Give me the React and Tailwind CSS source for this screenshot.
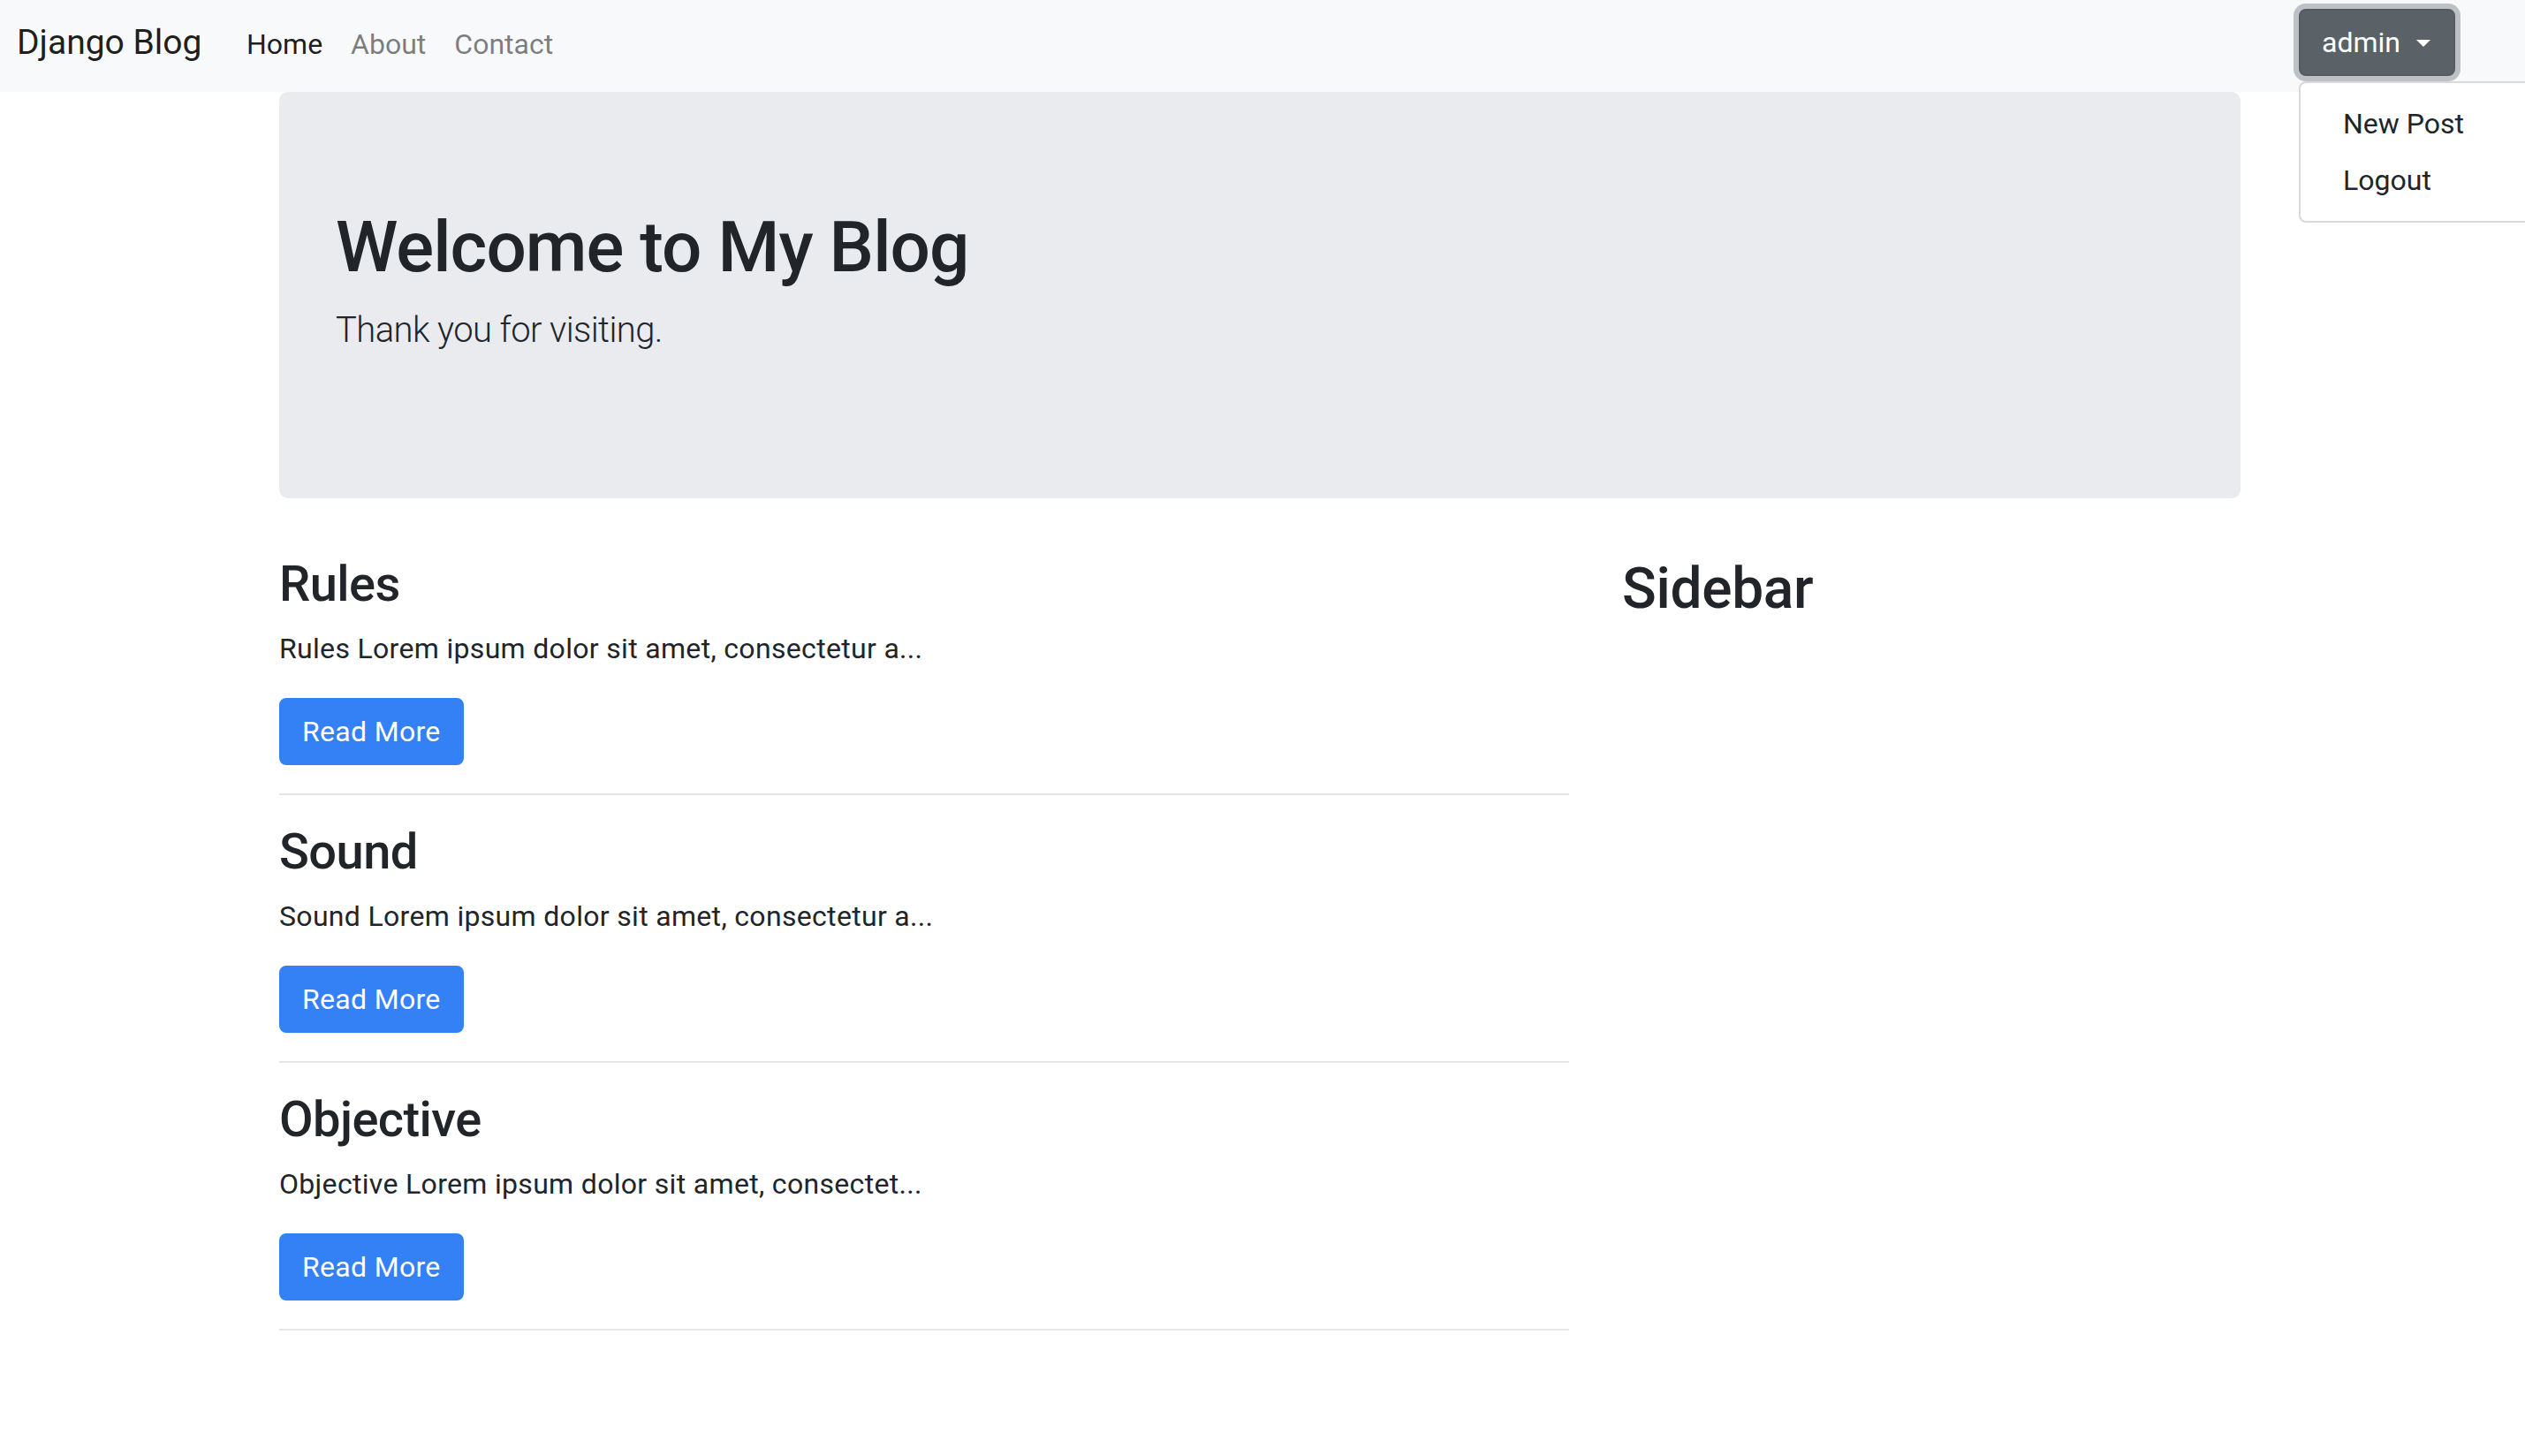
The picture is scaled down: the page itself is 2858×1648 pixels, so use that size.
const posts = [
  { title: "Rules", excerpt: "Rules Lorem ipsum dolor sit amet, consectetur a..." },
  { title: "Sound", excerpt: "Sound Lorem ipsum dolor sit amet, consectetur a..." },
  { title: "Objective", excerpt: "Objective Lorem ipsum dolor sit amet, consectet..." },
];

function Navbar() {
  return (
    <nav className="relative h-[104px] bg-[#f8f9fa] flex items-center pl-[19px] pr-[79px]">
      <a className="w-[244px] text-[39px] leading-[50px] mb-[8px] text-black/90 whitespace-nowrap">
        Django Blog
      </a>
      <ul className="flex items-center text-[32px] leading-[48px] mb-[4px]">
        <li className="px-4 text-black/90">Home</li>
        <li className="px-4 text-black/50">About</li>
        <li className="px-4 text-black/50">Contact</li>
      </ul>

      {/* user menu, shown open */}
      <div className="relative ml-auto self-start mt-[10px]">
        <button className="h-[76px] pl-[24px] pr-[26px] flex items-center bg-[#5a6268] border-2 border-[#545b62] rounded-[8px] text-white text-[32px] shadow-[0_0_0_6px_rgba(130,138,145,0.5)]">
          admin
          <span className="ml-[18px] mt-[2px] w-0 h-0 border-t-[8px] border-t-white border-x-[8px] border-x-transparent" />
        </button>
        <div className="absolute left-0 top-[82px] w-[320px] bg-white border-2 border-black/15 rounded-[8px] py-[14px] text-[32px] leading-[48px] text-[#212529] z-10">
          <div className="px-[48px] py-2 whitespace-nowrap">New Post</div>
          <div className="px-[48px] py-2 whitespace-nowrap">Logout</div>
        </div>
      </div>
    </nav>
  );
}

function PostCard({ post }) {
  return (
    <div>
      <h3 className="text-[56px] leading-[66px] font-medium tracking-[-0.01em] mb-4">{post.title}</h3>
      <p className="text-[32px] leading-[48px] tracking-[0.01em] mb-8">{post.excerpt}</p>
      <button className="block h-[76px] px-[24px] bg-[#3480f5] border-2 border-[#3480f5] rounded-[8px] text-white text-[32px] tracking-[0.01em]">
        Read More
      </button>
      <hr className="mt-8 mb-[31px] border-0 border-t-2 border-black/10" />
    </div>
  );
}

export default function App() {
  return (
    <div className="min-h-screen bg-white overflow-x-hidden text-[#212529] font-['Roboto','Liberation_Sans',sans-serif]">
      <Navbar />
      <main className="ml-[316px] w-[2220px]">
        <div className="bg-[#e9ebef] rounded-[10px] px-16 py-32 mb-16">
          <h1 className="text-[80px] leading-[96px] font-medium tracking-[-0.012em] mb-4">Welcome to My Blog</h1>
          <p className="text-[40px] leading-[60px] font-light tracking-[-0.015em] mb-8">Thank you for visiting.</p>
        </div>

        <div className="flex">
          <div className="w-[1460px] mr-[60px]">
            {posts.map((post) => (
              <PostCard key={post.title} post={post} />
            ))}
          </div>
          <div className="w-[700px]">
            <h2 className="text-[64px] leading-[77px] font-medium tracking-[-0.005em]">Sidebar</h2>
          </div>
        </div>
      </main>
    </div>
  );
}
